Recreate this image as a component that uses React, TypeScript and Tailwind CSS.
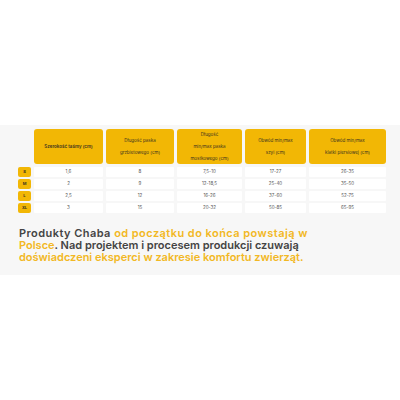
const headers = [
  ["Szerokość taśmy (cm)"],
  ["Długość paska", "grzbietowego (cm)"],
  ["Długość", "min/max paska", "mostkowego (cm)"],
  ["Obwód min/max", "szyi (cm)"],
  ["Obwód min/max", "klatki piersiowej (cm)"],
];

const rows = [
  { size: "S", values: ["1,6", "8", "7,5-10", "17-27", "26-35"] },
  { size: "M", values: ["2", "9", "12-18,5", "25-40", "35-50"] },
  { size: "L", values: ["2,5", "12", "16-26", "37-60", "52-75"] },
  { size: "XL", values: ["3", "15", "20-32", "50-85", "65-95"] },
];

const App = () => {
  return (
    <main
      className="w-[400px] h-[400px] bg-white pt-[125px]"
      style={{ fontFamily: "Inter, 'Noto Sans', sans-serif" }}
    >
      <section className="h-[150px] bg-[#f7f7f7] pt-[4px] pl-[18px]">
        <div className="grid grid-cols-[13px_69px_68px_65px_61px_77px] gap-x-[3px] gap-y-[2px]">
          <div className="mb-[1px]" />
          {headers.map((lines, i) => (
            <div
              key={i}
              className="h-[35px] mb-[1px] rounded-[3px] bg-[#f2b705] flex flex-col items-center justify-center text-[4.5px] leading-[12px] text-[#3b3320]"
            >
              {lines.map((line) => (
                <span key={line} className={i === 0 ? "font-semibold" : ""}>
                  {line}
                </span>
              ))}
            </div>
          ))}
          {rows.map((row) => (
            <>
              <div
                key={row.size}
                className="h-[10px] rounded-[2px] bg-[#f2b705] flex items-center justify-center text-[4px] font-bold text-[#3b3320]"
              >
                {row.size}
              </div>
              {row.values.map((v, j) => (
                <div
                  key={row.size + j}
                  className="h-[10px] rounded-[1px] bg-white flex items-center justify-center text-[4.5px] text-[#555]"
                >
                  {v}
                </div>
              ))}
            </>
          ))}
        </div>
        <p className="mt-[14px] pl-[1px] text-[11px] leading-[12px] font-semibold text-[#444] whitespace-nowrap">
          <span className="tracking-[0.45px]">
            Produkty Chaba{" "}
            <span className="text-[#f2b824]">od początku do końca powstają w</span>
          </span>
          <br />
          <span className="text-[#f2b824]">Polsce</span>. Nad projektem i procesem produkcji czuwają
          <br />
          <span className="text-[#f2b824]">doświadczeni eksperci w zakresie komfortu zwierząt.</span>
        </p>
      </section>
    </main>
  );
};

export default App;
